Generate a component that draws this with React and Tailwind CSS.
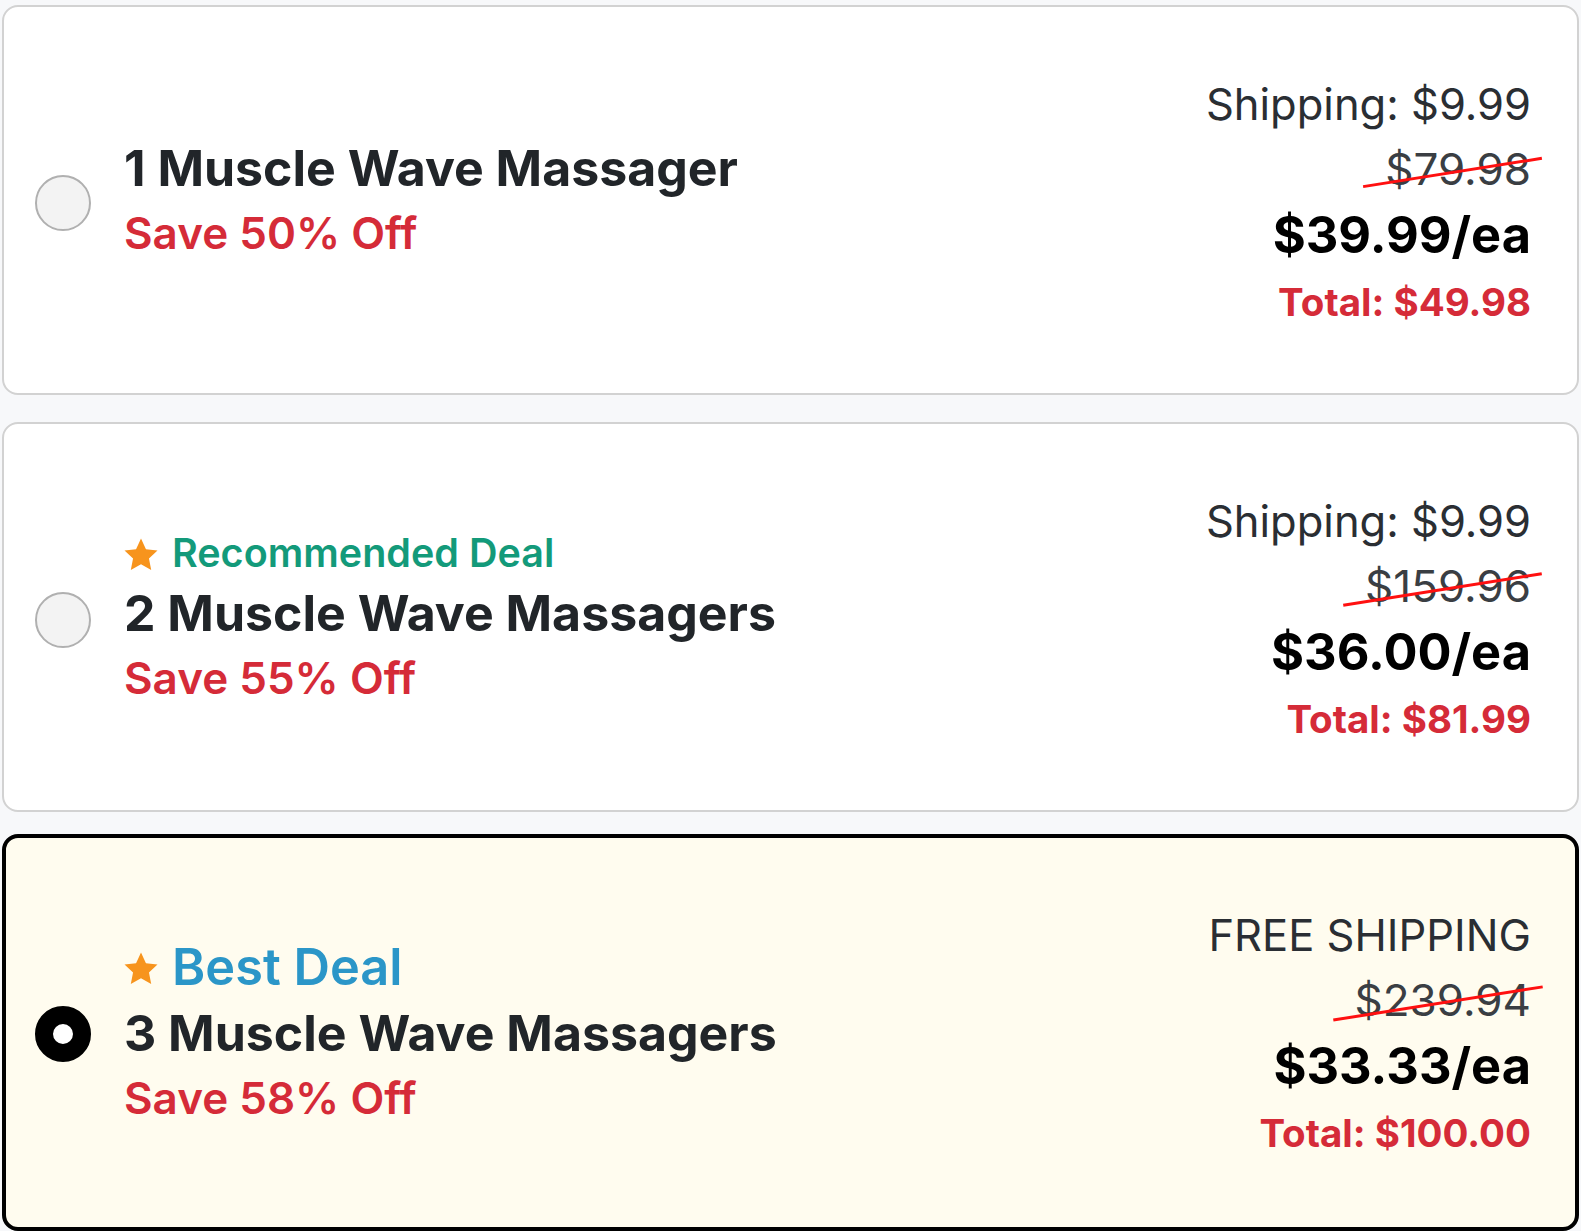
import React from 'react';

const deals = [
  {
    id: 1,
    title: '1 Muscle Wave Massager',
    save: 'Save 50% Off',
    shipping: 'Shipping: $9.99',
    was: '$79.98',
    each: '$39.99/ea',
    total: 'Total: $49.98',
  },
  {
    id: 2,
    badge: 'Recommended Deal',
    badgeClass: 'text-[#139a7a] text-[39.5px] font-semibold leading-[56px]',
    title: '2 Muscle Wave Massagers',
    save: 'Save 55% Off',
    shipping: 'Shipping: $9.99',
    was: '$159.96',
    each: '$36.00/ea',
    total: 'Total: $81.99',
  },
  {
    id: 3,
    badge: 'Best Deal',
    badgeClass: 'text-[#2b96c8] text-[50.5px] font-semibold leading-[68px]',
    title: '3 Muscle Wave Massagers',
    save: 'Save 58% Off',
    shipping: 'FREE SHIPPING',
    was: '$239.94',
    each: '$33.33/ea',
    total: 'Total: $100.00',
    selected: true,
  },
];

function Star() {
  return (
    <svg width="36" height="36" viewBox="0 0 24 24" className="shrink-0 mt-[4px] -ml-[1px]">
      <path
        d="M12 1l3.3 7.1 7.7.9-5.7 5.3 1.5 7.7L12 18.1 5.2 22l1.5-7.7L1 9l7.7-.9z"
        fill="#f7941d"
      />
    </svg>
  );
}

function Radio({ checked }) {
  return checked ? (
    <span className="block w-[56px] h-[56px] rounded-full border-[18px] border-black bg-white shrink-0" />
  ) : (
    <span className="block w-[56px] h-[56px] rounded-full border-2 border-[#b0b0b0] bg-[#f3f3f3] shrink-0" />
  );
}

function DealCard({ deal }) {
  const selected = deal.selected;
  return (
    <div
      className={
        selected
          ? 'flex items-center rounded-[16px] border-4 border-black bg-[#fffcef] pl-[29px] pr-[44px] pt-[65px] pb-[59px]'
          : 'flex items-center rounded-[16px] border-2 border-[#d2d2d2] bg-white pl-[31px] pr-[46px] pt-[65px] pb-[56px]'
      }
    >
      <div className="mb-[4px]">
        <Radio checked={selected} />
      </div>

      {/* Left: name + saving */}
      <div className="ml-[33px] mb-[8px] flex-1">
        {deal.badge && (
          <div className="flex items-center gap-[13px]">
            <Star />
            <span className={deal.badgeClass}>{deal.badge}</span>
          </div>
        )}
        <div className="text-[50px] font-bold leading-[65px] text-[#212529]">{deal.title}</div>
        <div className="text-[44px] font-semibold leading-[65px] text-[#d52b38]">{deal.save}</div>
      </div>

      {/* Right: pricing */}
      <div className="flex flex-col items-end text-right">
        <div className="text-[43.5px] leading-[65px] text-[#2a2e33]">{deal.shipping}</div>
        <div className="relative text-[44px] leading-[65px] text-[#3a3e43]">
          {deal.was}
          <span className="absolute left-[-23px] right-[-12px] top-[52%] h-[3px] bg-[#ff1010] -rotate-[9deg]" />
        </div>
        <div className="text-[50.5px] font-bold leading-[65px] text-black">{deal.each}</div>
        <div className="text-[38.5px] font-bold leading-[70px] text-[#d52b38]">{deal.total}</div>
      </div>
    </div>
  );
}

export default function App() {
  return (
    <div className="min-h-screen bg-[#f7f8fa] px-[2px] pt-[5px] pb-[2px]" style={{ fontFamily: 'Inter, "Noto Sans", sans-serif' }}>
      <div className="flex flex-col">
        <DealCard deal={deals[0]} />
        <div className="mt-[27px]">
          <DealCard deal={deals[1]} />
        </div>
        <div className="mt-[22px]">
          <DealCard deal={deals[2]} />
        </div>
      </div>
    </div>
  );
}
